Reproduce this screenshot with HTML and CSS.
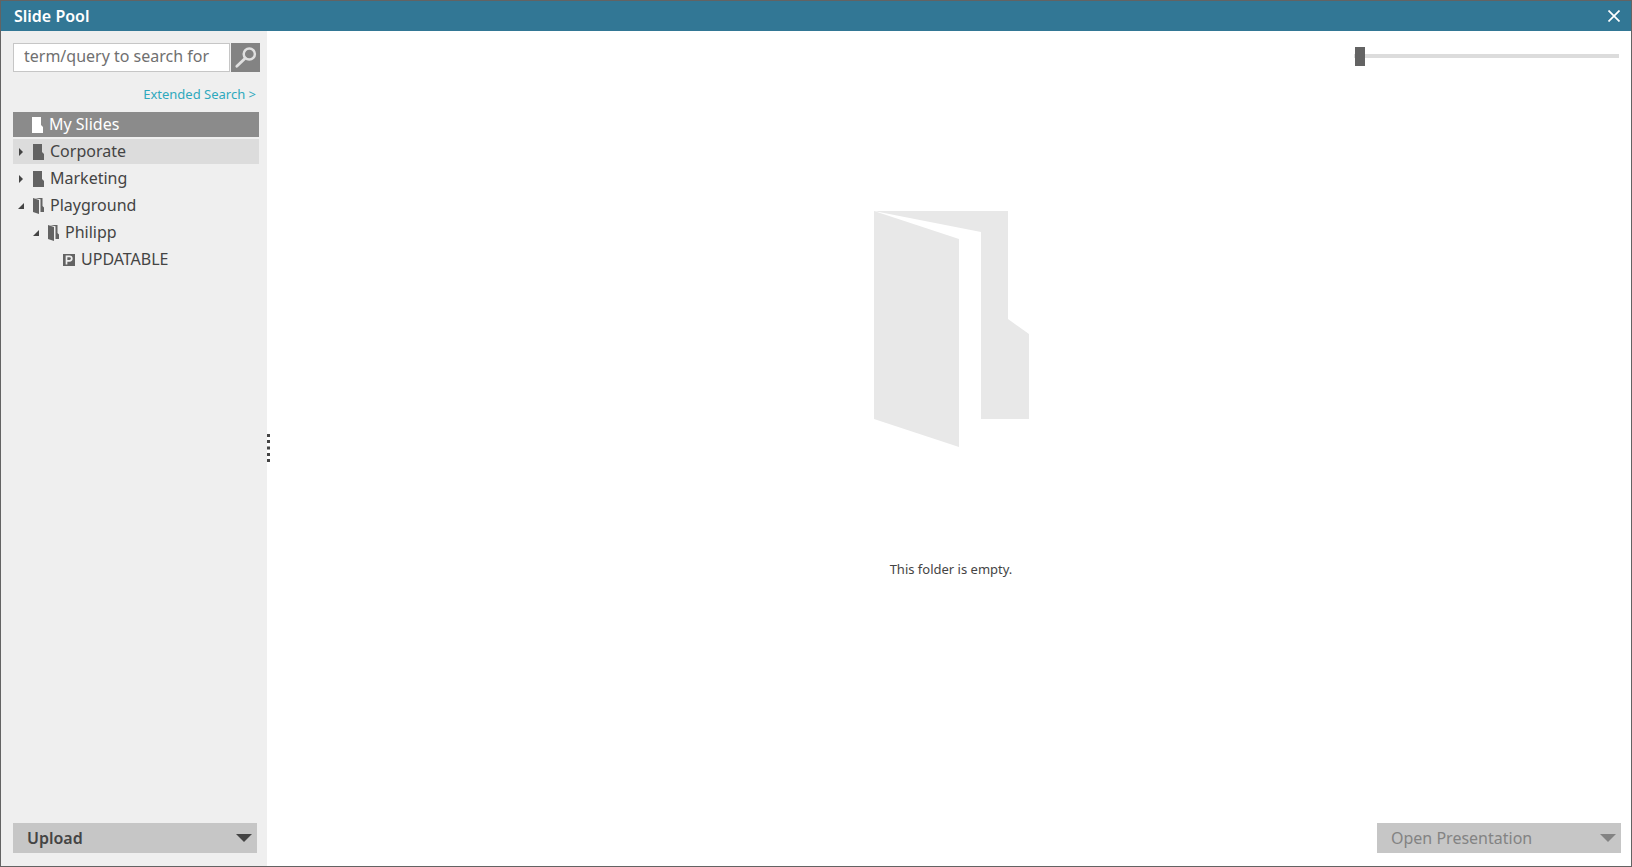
FILE: index.html
```html
<!DOCTYPE html>
<html lang="en">
<head>
<meta charset="utf-8">
<title>Slide Pool</title>
<link rel="stylesheet" href="styles.css">
</head>
<body>
<div class="window">
  <header class="titlebar">
    <h1 class="title">Slide Pool</h1>
    <button class="close" type="button" aria-label="Close">
      <svg width="12" height="12" viewBox="0 0 12 12"><path d="M0.5 0.5 11.5 11.5M11.5 0.5 0.5 11.5" fill="none" stroke="#fff" stroke-width="1.7"/></svg>
    </button>
  </header>
  <div class="body">
    <aside class="sidebar">
      <form class="search">
        <input class="search-input" type="text" aria-label="Search slides" placeholder="term/query to search for">
        <button class="search-button" type="button" aria-label="Search">
          <svg width="29" height="29" viewBox="0 0 29 29"><g fill="none" stroke="#e0e0e0"><circle cx="18.300" cy="11" r="5.600" stroke-width="2.500"/><path d="M14.200 15.300 5.800 23.300" stroke-width="2.800" stroke-linecap="round"/></g></svg>
        </button>
      </form>
      <a class="extended" href="#">Extended Search &gt;</a>
      <ul class="tree" role="tree" aria-label="Folders">
        <li class="node selected" role="treeitem" aria-selected="true">
          <span class="arrow"></span>
          <svg class="icon" width="12" height="16" viewBox="0 0 12 16"><path d="M0 0H9V8L11 10V16H0Z"/></svg>
          <span>My Slides</span>
        </li>
        <li class="node hovered" role="treeitem" aria-expanded="false">
          <svg class="arrow" width="6" height="8" viewBox="0 0 6 8"><path d="M1 0 5 4 1 8Z"/></svg>
          <svg class="icon" width="12" height="16" viewBox="0 0 12 16"><path d="M0 0H9V8L11 10V16H0Z"/></svg>
          <span>Corporate</span>
        </li>
        <li class="node" role="treeitem" aria-expanded="false">
          <svg class="arrow" width="6" height="8" viewBox="0 0 6 8"><path d="M1 0 5 4 1 8Z"/></svg>
          <svg class="icon" width="12" height="16" viewBox="0 0 12 16"><path d="M0 0H9V8L11 10V16H0Z"/></svg>
          <span>Marketing</span>
        </li>
        <li class="node" role="treeitem" aria-expanded="true">
          <svg class="arrow" width="6" height="6" viewBox="0 0 6 6"><path d="M6 0V6H0Z"/></svg>
          <svg class="icon" width="12" height="16" viewBox="0 0 12 16"><path d="M0 0 6 2V16L0 14Z"/><path d="M1.500 0H9.500V8L11 9.500V14H7.500V1.300Z"/></svg>
          <span>Playground</span>
        </li>
        <li class="node level-2" role="treeitem" aria-level="2" aria-expanded="true">
          <svg class="arrow" width="6" height="6" viewBox="0 0 6 6"><path d="M6 0V6H0Z"/></svg>
          <svg class="icon" width="12" height="16" viewBox="0 0 12 16"><path d="M0 0 6 2V16L0 14Z"/><path d="M1.500 0H9.500V8L11 9.500V14H7.500V1.300Z"/></svg>
          <span>Philipp</span>
        </li>
        <li class="node level-3" role="treeitem" aria-level="3">
          <span class="arrow"></span>
          <svg class="icon" width="12" height="12" viewBox="0 0 12 12"><path d="M0 0H12V12H0Z"/><path d="M3.500 10.500V2.300H6.500A2.200 2.200 0 0 1 6.500 6.900H3.500" fill="none" stroke="#efefef" stroke-width="1.700"/></svg>
          <span>UPDATABLE</span>
        </li>
      </ul>
      <button class="menu-button" type="button" aria-haspopup="menu">
        <span>Upload</span>
        <svg width="16" height="8" viewBox="0 0 16 8"><path d="M0 0H16L8 8Z" fill="currentColor"/></svg>
      </button>
      <svg class="grip" width="3" height="28" viewBox="0 0 3 28" fill="#444"><path d="M0 0H3V3H0ZM0 6H3V9H0ZM0 12.500H3V15.500H0ZM0 19H3V22H0ZM0 25H3V28H0Z"/></svg>
    </aside>
    <main class="content">
      <input class="zoom" type="range" min="0" max="100" value="0" aria-label="Thumbnail size">
      <div class="empty">
        <svg width="155" height="236" viewBox="0 0 155 236" fill="#e8e8e8"><path d="M0 0 85 28V236L0 208Z"/><path d="M0 0H134V108L155 123V208H107V21Z"/></svg>
        <p class="empty-text">This folder is empty.</p>
      </div>
      <button class="menu-button open" type="button" aria-haspopup="menu" disabled>
        <span>Open Presentation</span>
        <svg width="16" height="8" viewBox="0 0 16 8"><path d="M0 0H16L8 8Z" fill="currentColor"/></svg>
      </button>
    </main>
  </div>
</div>
</body>
</html>
```
FILE: styles.css
```css
* {
  box-sizing: border-box;
}

body {
  margin: 0;
  font-family: "Noto Sans", "Open Sans", sans-serif;
  font-size: 16px;
  color: #444;
}

button,
input {
  font: inherit;
  border: 0;
  border-radius: 0;
  padding: 0;
}

.window {
  display: flex;
  flex-direction: column;
  min-height: 100vh;
  border: 1px solid #636363;
  background: #fff;
}

.titlebar {
  display: flex;
  align-items: center;
  justify-content: space-between;
  height: 30px;
  padding: 0 11px 0 13px;
  background: #327795;
}

.title {
  margin: 0;
  font-size: 16px;
  line-height: 30px;
  font-weight: 600;
  color: #fff;
}

.close {
  display: flex;
  background: none;
}

.body {
  flex: 1;
  display: flex;
}

.sidebar {
  position: relative;
  display: flex;
  flex-direction: column;
  width: 266px;
  padding: 12px 8px 13px 12px;
  background: #efefef;
}

.search {
  display: flex;
  gap: 1px;
}

.search-input {
  flex: none;
  width: 217px;
  height: 29px;
  padding: 0 10px 3px;
  border: 1px solid #c6c6c6;
  background: #fff;
}

.search-input::placeholder {
  color: #707070;
  opacity: 1;
}

.search-button {
  display: flex;
  flex: none;
  width: 29px;
  height: 29px;
  background: #838383;
}

.extended {
  align-self: flex-end;
  margin: 12px 3px 8px 0;
  font-size: 13px;
  line-height: 20px;
  color: #2ea9bd;
  text-decoration: none;
}

.tree {
  display: flex;
  flex-direction: column;
  gap: 2px;
  margin: 0;
  padding: 0;
  list-style: none;
}

.node {
  display: flex;
  align-items: center;
  height: 25px;
  padding-left: 5px;
  line-height: 25px;
  fill: #636363;
}

.arrow {
  width: 6px;
  margin-right: 9px;
  fill: #444;
}

.icon {
  margin-right: 5px;
}

.selected {
  padding-left: 4px;
  background: #8b8b8b;
  color: #fff;
  fill: #fff;
}

.hovered {
  background: #dcdcdc;
}

.level-2 {
  padding-left: 20px;
}

.level-3 {
  padding-left: 35px;
}

.level-3 .icon {
  margin-right: 6px;
}

.menu-button {
  display: flex;
  align-items: center;
  justify-content: space-between;
  width: 244px;
  height: 30px;
  margin-top: auto;
  padding: 0 5px 0 14px;
  background: #c6c6c6;
  color: #444;
  font-weight: 600;
}

.open {
  color: #838383;
  font-weight: 400;
}

.grip {
  position: absolute;
  left: 100%;
  top: 403px;
}

.content {
  flex: 1;
  display: flex;
  flex-direction: column;
  align-items: flex-end;
  padding: 16px 10px 13px 14px;
}

.zoom {
  appearance: none;
  width: 265px;
  height: 19px;
  margin: 0 2px 0 0;
  padding-left: 1px;
  background: linear-gradient(#dcdcdc, #dcdcdc) 0 7px / 100% 4px no-repeat;
}

.zoom::-webkit-slider-thumb {
  appearance: none;
  width: 10px;
  height: 19px;
  background: #636363;
}

.empty {
  display: flex;
  flex-direction: column;
  align-items: center;
  align-self: stretch;
  padding-top: 145px;
}

.empty-text {
  margin: 112px 0 0;
  font-size: 13px;
  line-height: 20px;
}
```
